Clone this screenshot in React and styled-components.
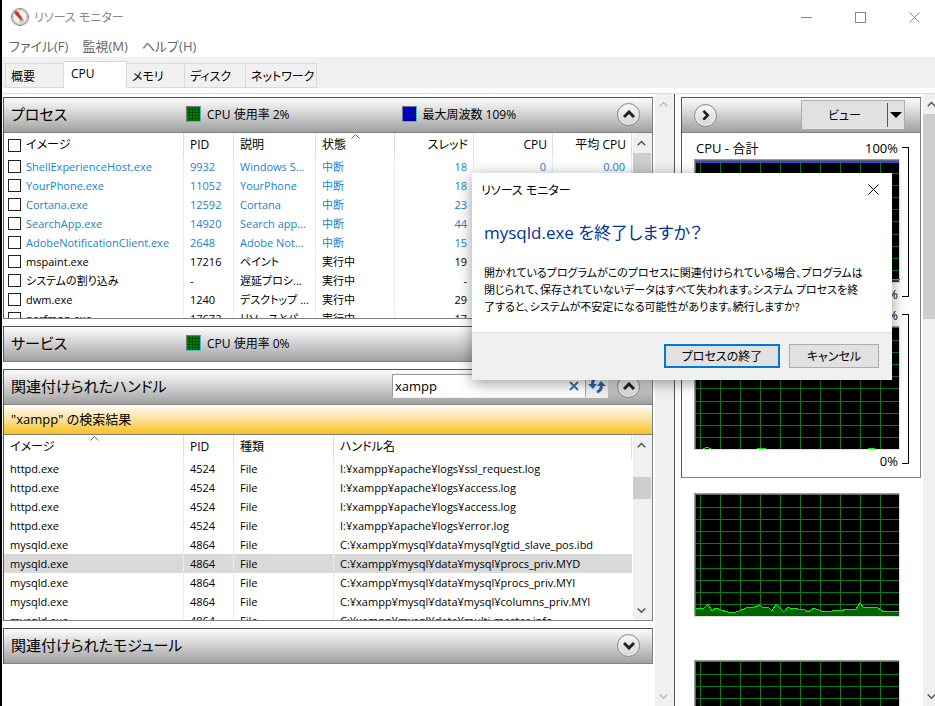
import React, { useState } from 'react';
import styled, { createGlobalStyle } from 'styled-components';

const GlobalStyle = createGlobalStyle`
  * {
    box-sizing: border-box;
  }

  body {
    margin: 0;
    background: #fff;
    color: #000;
    font-family: 'Open Sans', 'Noto Sans CJK JP', sans-serif;
    font-size: 12px;
    font-feature-settings: 'palt';
    overflow: hidden;
  }

  button, input {
    font: inherit;
    font-feature-settings: inherit;
    color: inherit;
    margin: 0;
    padding: 0;
  }
`;

const Window = styled.div`
  position: relative;
  display: flex;
  flex-direction: column;
  height: 100vh;
  border-left: 2px solid #000;
`;

const TitleBar = styled.header`
  display: flex;
  align-items: center;
  height: 34px;
  padding-left: 8px;
  color: #888;
`;

const AppTitle = styled.h1`
  flex: 1;
  margin: 0 0 0 4px;
  font-size: 12px;
  font-weight: 400;
`;

const WindowControls = styled.div`
  display: flex;
  gap: 12px;
`;

const WindowButton = styled.button`
  display: flex;
  align-items: center;
  justify-content: center;
  width: 42px;
  height: 32px;
  border: 0;
  background: none;
`;

const MenuBar = styled.nav`
  display: flex;
  gap: 14px;
  height: 23px;
  padding-left: 7px;
`;

const MenuItem = styled.button`
  border: 0;
  background: none;
  color: #666;
  font-size: 13px;
  line-height: 24px;
`;

const TabStrip = styled.div`
  display: flex;
  align-items: flex-end;
  height: 31px;
  padding-left: 3px;
  background: #f0f0f0;
`;

const Tab = styled.button`
  width: ${({ $width }) => $width}px;
  height: ${({ $active }) => ($active ? 27 : 25)}px;
  padding: ${({ $active }) => ($active ? '0 0 3px 7px' : '0 0 0 5px')};
  border: 1px solid #d9d9d9;
  border-left-width: ${({ $first }) => ($first ? 1 : 0)}px;
  border-bottom-color: ${({ $active }) => ($active ? '#fff' : '#d9d9d9')};
  background: ${({ $active }) => ($active ? '#fff' : '#f0f0f0')};
  text-align: left;
  white-space: nowrap;
`;

const Content = styled.main`
  display: flex;
  flex: 1;
  min-height: 0;
  margin-top: 5px;
  border-top: 1px solid #dcdcdc;
`;

const LeftPane = styled.div`
  display: flex;
  flex: 1;
  min-width: 0;
  gap: 2px;
  padding-left: 1px;
  border-right: 1px solid #555;
`;

const Sections = styled.div`
  display: flex;
  flex: 1;
  flex-direction: column;
  gap: 7px;
  min-width: 0;
  padding-top: 3px;
`;

const Section = styled.section`
  border: 1px solid #808080;
  border-top-color: #555;
  border-left-color: #555;
`;

const SectionHeader = styled.div`
  display: flex;
  align-items: center;
  height: ${({ $open }) => ($open ? 35 : 34)}px;
  padding: 0 12px 2px 7px;
  border-bottom: ${({ $open }) => ($open ? '1px solid #808080' : '0')};
  background: linear-gradient(#fdfdfd, #d0d0d0 50%, #a0a0a0);
`;

const SectionTitle = styled.h2`
  min-width: 175px;
  margin: 0;
  font-size: 15px;
  font-weight: 400;
  line-height: 24px;
`;

const Legend = styled.span`
  display: flex;
  align-items: center;
  gap: 6px;
  width: 219px;
`;

const Swatch = styled.span`
  width: 15px;
  height: 16px;
  border: 1px solid #777;
  border-right-color: #4bb;
  border-bottom-color: #4bb;
  background:
    repeating-linear-gradient(90deg, transparent 0 2px, rgba(0, 0, 0, 0.35) 2px 3px),
    repeating-linear-gradient(transparent 0 2px, rgba(0, 0, 0, 0.35) 2px 3px),
    ${({ $color }) => $color};
`;

const RoundButton = styled.button`
  display: flex;
  align-items: center;
  justify-content: center;
  flex: none;
  width: 23px;
  height: 23px;
  margin-left: ${({ $end }) => ($end ? 'auto' : '0')};
  border: 1px solid #888;
  border-radius: 50%;
  background: linear-gradient(#fafafa, #d4d4d4);
  box-shadow: inset 0 0 0 1px #eee;
`;

const SearchBox = styled.div`
  display: flex;
  width: 216px;
  height: 24px;
  margin: 0 9px 0 auto;
  border: 1px solid #999;
  border-right: 0;
  border-bottom-color: #eee;
  background: #fff;
`;

const SearchInput = styled.input`
  flex: 1;
  min-width: 0;
  padding-left: 2px;
  border: 0;
  outline: 0;
  background: none;
  font-size: 13px;
`;

const SearchButton = styled.button`
  display: flex;
  align-items: center;
  justify-content: center;
  width: 23px;
  border: 0;
  border-left: 1px solid ${({ $divided }) => ($divided ? '#aaa' : 'transparent')};
  background: ${({ $divided }) => ($divided ? '#f2f2f2' : 'none')};
`;

const ResultBar = styled.div`
  height: 30px;
  padding-left: 7px;
  border-bottom: 1px solid #808080;
  background: linear-gradient(#fffefa, #fbe09a 50%, #f8c31f);
  font-size: 13px;
  line-height: 29px;
`;

const ListArea = styled.div`
  display: flex;
  gap: 1px;
  height: 185px;
  overflow: hidden;
`;

const Table = styled.table`
  flex: 1;
  align-self: flex-start;
  width: 100%;
  min-width: 0;
  border-collapse: separate;
  border-spacing: 0;
  table-layout: fixed;
`;

const HeadCell = styled.th`
  position: relative;
  width: ${({ $width }) => ($width ? `${$width}px` : 'auto')};
  height: 24px;
  padding: 0 5px 0 6px;
  border-right: 1px solid #e0e0e0;
  font-weight: 400;
  line-height: 24px;
  text-align: ${({ $right }) => ($right ? 'right' : 'left')};
  white-space: nowrap;
`;

const SortMark = styled.svg`
  position: absolute;
  top: 1px;
  left: calc(50% - 4px);
`;

const Row = styled.tr`
  color: ${({ $suspended }) => ($suspended ? '#1a7fd4' : '#000')};
  background: ${({ $selected }) => ($selected ? '#d9d9d9' : 'none')};
`;

const Cell = styled.td`
  height: 19px;
  padding: 0 6px;
  border-right: 1px solid ${({ $plain }) => ($plain ? 'transparent' : '#e3eef8')};
  font-size: 11px;
  line-height: 19px;
  text-align: ${({ $right }) => ($right ? 'right' : 'left')};
  white-space: nowrap;
`;

const CheckLabel = styled.label`
  display: flex;
  align-items: center;
  gap: 5px;
  margin-left: -2px;
`;

const Checkbox = styled.input`
  appearance: none;
  width: 13px;
  height: 13px;
  border: 1px solid #222;
  background: #fff;
`;

const ScrollTrack = styled.div`
  display: flex;
  flex: none;
  flex-direction: column;
  width: ${({ $width }) => $width}px;
  background: #f0f0f0;
  overflow: hidden;
`;

const ScrollButton = styled.button`
  display: flex;
  align-items: center;
  justify-content: center;
  flex: none;
  width: 17px;
  height: 20px;
  margin-top: ${({ $end }) => ($end ? 'auto' : '0')};
  border: 0;
  background: none;
`;

const ScrollThumb = styled.div`
  flex: none;
  width: 18px;
  height: ${({ $height }) => $height}px;
  margin-top: ${({ $offset }) => $offset || 0}px;
  background: #cdcdcd;
`;

const RightPane = styled.aside`
  display: flex;
  flex: none;
  gap: 2px;
  width: 260px;
  padding-left: 6px;
`;

const GraphColumn = styled.div`
  flex: 1;
  padding-top: 3px;
  overflow: hidden;
`;

const GraphPanel = styled.section`
  padding-bottom: 4px;
  border: 1px solid #808080;
  border-top-color: #555;
  border-left-color: #555;
`;

const GraphHeader = styled.div`
  display: flex;
  align-items: center;
  justify-content: space-between;
  height: 35px;
  margin-bottom: 6px;
  padding: 0 15px 0 12px;
  border-bottom: 1px solid #808080;
  background: linear-gradient(#fdfdfd, #d0d0d0 50%, #a0a0a0);
`;

const ViewButton = styled.button`
  display: flex;
  align-items: center;
  width: 104px;
  height: 30px;
  border: 1px solid #adadad;
  background: #e1e1e1;
`;

const ViewLabel = styled.span`
  flex: 1;
`;

const ViewArrow = styled.span`
  display: flex;
  align-items: center;
  justify-content: center;
  width: 17px;
  height: 24px;
  border-left: 1px solid #555;
`;

const GraphBlock = styled.div`
  display: flex;
  gap: 2px;
  padding-left: 12px;
`;

const GraphBody = styled.div`
  width: 206px;
`;

const GraphLabels = styled.div`
  display: flex;
  justify-content: space-between;
  height: ${({ $bottom }) => ($bottom ? 23 : 20)}px;
  padding: 0 2px;
  font-size: 13px;
  line-height: ${({ $bottom }) => ($bottom ? 23 : 18)}px;
`;

const Bracket = styled.div`
  width: 7px;
  margin: 8px 0 9px;
  border: 1px solid #000;
  border-left: 0;
`;

const ExtraGraphs = styled.div`
  display: flex;
  flex-direction: column;
  gap: 43px;
  padding: 15px 0 0 13px;
`;

const GraphSvg = styled.svg`
  display: block;
`;

const Dialog = styled.div`
  position: absolute;
  top: 173px;
  right: 43px;
  width: 420px;
  background: #fff;
  box-shadow: 0 3px 14px rgba(0, 0, 0, 0.4);
`;

const DialogBar = styled.div`
  display: flex;
  align-items: center;
  justify-content: space-between;
  height: 33px;
  padding-left: 9px;
`;

const DialogClose = styled(WindowButton)`
  width: 38px;
`;

const DialogText = styled.div`
  height: 126px;
  padding: 14px 0 0 12px;
`;

const DialogHeading = styled.h2`
  margin: 0 0 18px;
  color: #003399;
  font-size: 17px;
  font-weight: 400;
  line-height: 26px;
`;

const DialogMessage = styled.p`
  margin: 0;
  font-size: 11px;
  line-height: 17px;
  white-space: nowrap;
`;

const DialogFooter = styled.div`
  display: flex;
  justify-content: flex-end;
  gap: 9px;
  height: 48px;
  padding: 11px 13px 0 0;
  border-top: 1px solid #dfdfdf;
  background: #f0f0f0;
`;

const DialogButton = styled.button`
  width: ${({ $primary }) => ($primary ? 116 : 90)}px;
  height: 24px;
  border: ${({ $primary }) => ($primary ? '2px solid #0078d7' : '1px solid #adadad')};
  background: #e1e1e1;
`;

const tabs = [
  { name: '概要', width: 59 },
  { name: 'CPU', width: 63 },
  { name: 'メモリ', width: 58 },
  { name: 'ディスク', width: 61 },
  { name: 'ネットワーク', width: 71 },
];

const processes = [
  ['ShellExperienceHost.exe', '9932', 'Windows S...', '中断', '18', '0', '0.00'],
  ['YourPhone.exe', '11052', 'YourPhone', '中断', '18', '0', '0.00'],
  ['Cortana.exe', '12592', 'Cortana', '中断', '23', '0', '0.00'],
  ['SearchApp.exe', '14920', 'Search app...', '中断', '44', '0', '0.00'],
  ['AdobeNotificationClient.exe', '2648', 'Adobe Not...', '中断', '15', '0', '0.00'],
  ['mspaint.exe', '17216', 'ペイント', '実行中', '19', '0', '0.00'],
  ['システムの割り込み', '-', '遅延プロシ...', '実行中', '-', '0', '0.00'],
  ['dwm.exe', '1240', 'デスクトップ ...', '実行中', '29', '0', '0.00'],
  ['perfmon.exe', '17672', 'リソースとパ...', '実行中', '17', '0', '0.00'],
];

const processColumns = [
  { name: 'PID', width: 50 },
  { name: '説明', width: 82 },
  { name: '状態', width: 79, sorted: true },
  { name: 'スレッド', width: 79, right: true },
  { name: 'CPU', width: 79, right: true },
  { name: '平均 CPU', right: true },
];

const handles = [
  ['httpd.exe', '4524', 'I:¥xampp¥apache¥logs¥ssl_request.log'],
  ['httpd.exe', '4524', 'I:¥xampp¥apache¥logs¥access.log'],
  ['httpd.exe', '4524', 'I:¥xampp¥apache¥logs¥access.log'],
  ['httpd.exe', '4524', 'I:¥xampp¥apache¥logs¥error.log'],
  ['mysqld.exe', '4864', 'C:¥xampp¥mysql¥data¥mysql¥gtid_slave_pos.ibd'],
  ['mysqld.exe', '4864', 'C:¥xampp¥mysql¥data¥mysql¥procs_priv.MYD'],
  ['mysqld.exe', '4864', 'C:¥xampp¥mysql¥data¥mysql¥procs_priv.MYI'],
  ['mysqld.exe', '4864', 'C:¥xampp¥mysql¥data¥mysql¥columns_priv.MYI'],
  ['mysqld.exe', '4864', 'C:¥xampp¥mysql¥data¥multi-master.info'],
];

const gridX = [6, 26, 46, 66, 86, 106, 126, 146, 166, 186];
const gridY = [14, 26, 38, 50, 62, 75, 87, 99, 111];

const totalUsage = '2,120 206,120';
const serviceUsage = '2,124 9,123 13,121 17,123 20,124 62,124 64,122 71,122 73,124 173,124 175,122 180,122 182,124 205,124';
const coreUsage =
  '2,115 10,115 14,111 18,118 22,115 27,117 34,119 42,119 50,116 54,114 58,115 65,112 70,115 74,114 78,118 82,111 86,115 90,119 94,114 98,116 102,115 106,117 110,116 114,119 120,115 127,118 138,118 143,117 147,118 152,116 162,116 166,110 170,115 174,114 184,115 190,119 196,118 201,119 205,118';

const chevrons = {
  up: 'M1 7 L6 2 L11 7',
  down: 'M1 2 L6 7 L11 2',
  right: 'M3 0 L8 5 L3 10',
};

function Chevron({ dir, size = 12, color = '#222', weight = 3 }) {
  return (
    <svg width={size} height={size * 0.75} viewBox={dir === 'right' ? '0 -1 12 12' : '0 0 12 9'} aria-hidden="true">
      <path d={chevrons[dir]} fill="none" stroke={color} strokeWidth={weight} />
    </svg>
  );
}

function CloseIcon() {
  return (
    <svg width="11" height="11" viewBox="0 0 11 11" stroke="currentColor" aria-hidden="true">
      <path d="M0.5 0.5 L10.5 10.5 M10.5 0.5 L0.5 10.5" />
    </svg>
  );
}

function GaugeIcon() {
  return (
    <svg width="20" height="20" viewBox="0 0 20 20" aria-hidden="true">
      <circle cx="10" cy="10" r="8.5" fill="#f6f3ee" stroke="#85878a" />
      <circle cx="10" cy="10" r="7.5" fill="none" stroke="#b4b5b5" />
      <circle cx="10" cy="10" r="6.5" fill="none" stroke="#dcd8d2" />
      <path d="M4.5 4 L8 4.5 L13.5 13.5 L11.5 14 L5 7 Z" fill="#d8302c" />
      <path d="M9 13.5 L14 12 L13 15 L10 15.5 Z" fill="#b9b3ac" />
    </svg>
  );
}

function RefreshIcon() {
  return (
    <svg width="18" height="16" viewBox="0 0 18 16" aria-hidden="true">
      <path d="M0 6 L9 6 L5 11 Z M9 8 L13 3 L18 8 Z" fill="#2c64ad" />
      <path d="M5 7 C4 4 5 2 7 1 M13 7 C14 11 12 13 9 14" fill="none" stroke="#2c64ad" strokeWidth="3" />
    </svg>
  );
}

function SortArrow() {
  return (
    <SortMark width="9" height="5" viewBox="0 0 9 5" aria-hidden="true">
      <path d="M0.5 4.5 L4.5 0.5 L8.5 4.5" fill="none" stroke="#666" />
    </SortMark>
  );
}

function Graph({ points, flat, cap }) {
  return (
    <GraphSvg width="206" height="124" viewBox="0 0 206 124" shapeRendering="crispEdges" aria-hidden="true">
      <rect width="206" height="124" fill="#dcdcdc" />
      <path d="M0 0 H205 V1 H1 V123 H0 Z" fill="#9a9a9a" />
      <rect x="1" y="1" width="204" height="122" fill="#666" />
      <rect x="2" y="2" width="203" height="121" fill="#000" />
      {gridY.map((y) => <rect key={y} x="2" y={y} width="203" height="1" fill="#0a7a12" />)}
      {gridX.map((x) => <rect key={x} x={x} y="2" width="1" height="121" fill="#0a7a12" />)}
      {cap && <rect x="2" y="2" width="203" height="2" fill="#2850e8" />}
      {points && (
        <>
          {!flat && <polygon points={`2,123 ${points} 205,123`} fill="#006400" />}
          <svg x="2" y="2" width="203" height="121" viewBox="2 2 203 121">
            <polyline points={points} fill="none" stroke="#00f400" />
          </svg>
        </>
      )}
    </GraphSvg>
  );
}

function UsageGraph({ label, points, flat, cap }) {
  return (
    <GraphBlock>
      <GraphBody>
        <GraphLabels>
          <span>{label}</span>
          <span>100%</span>
        </GraphLabels>
        <Graph points={points} flat={flat} cap={cap} />
        <GraphLabels $bottom>
          <span />
          <span>0%</span>
        </GraphLabels>
      </GraphBody>
      <Bracket />
    </GraphBlock>
  );
}

function ScrollBar({ width, thumb, offset, muted }) {
  const color = muted ? '#bbb' : '#555';
  return (
    <ScrollTrack $width={width}>
      <ScrollButton aria-label="上へスクロール">
        <Chevron dir="up" size={9} color={color} weight={2} />
      </ScrollButton>
      {thumb && <ScrollThumb $height={thumb} $offset={offset} />}
      <ScrollButton $end aria-label="下へスクロール">
        <Chevron dir="down" size={9} color={color} weight={2} />
      </ScrollButton>
    </ScrollTrack>
  );
}

function ProcessTable() {
  return (
    <ListArea>
      <Table>
        <thead>
          <tr>
            <HeadCell $width={180}>
              <CheckLabel>
                <Checkbox type="checkbox" />
                イメージ
              </CheckLabel>
            </HeadCell>
            {processColumns.map(({ name, width, right, sorted }) => (
              <HeadCell key={name} $width={width} $right={right}>
                {name}
                {sorted && <SortArrow />}
              </HeadCell>
            ))}
          </tr>
        </thead>
        <tbody>
          {processes.map(([image, ...rest]) => (
            <Row key={image} $suspended={rest[2] === '中断'}>
              <Cell>
                <CheckLabel>
                  <Checkbox type="checkbox" />
                  {image}
                </CheckLabel>
              </Cell>
              {rest.map((value, i) => (
                <Cell key={processColumns[i].name} $right={processColumns[i].right}>{value}</Cell>
              ))}
            </Row>
          ))}
        </tbody>
      </Table>
      <ScrollBar width={19} thumb={120} />
    </ListArea>
  );
}

function HandleTable() {
  return (
    <ListArea>
      <Table>
        <thead>
          <tr>
            <HeadCell $width={180}>
              イメージ
              <SortArrow />
            </HeadCell>
            <HeadCell $width={50}>PID</HeadCell>
            <HeadCell $width={100}>種類</HeadCell>
            <HeadCell>ハンドル名</HeadCell>
          </tr>
        </thead>
        <tbody>
          {handles.map(([image, pid, path], i) => (
            <Row key={i} $selected={i === 5}>
              <Cell>{image}</Cell>
              <Cell>{pid}</Cell>
              <Cell>File</Cell>
              <Cell $plain>{path}</Cell>
            </Row>
          ))}
        </tbody>
      </Table>
      <ScrollBar width={19} thumb={22} offset={22} />
    </ListArea>
  );
}

function EndProcessDialog() {
  return (
    <Dialog role="dialog" aria-labelledby="dialog-heading">
      <DialogBar>
        <span>リソース モニター</span>
        <DialogClose aria-label="閉じる"><CloseIcon /></DialogClose>
      </DialogBar>
      <DialogText>
        <DialogHeading id="dialog-heading">mysqld.exe を終了しますか？</DialogHeading>
        <DialogMessage>
          開かれているプログラムがこのプロセスに関連付けられている場合、プログラムは<br />
          閉じられて、保存されていないデータはすべて失われます。システム プロセスを終<br />
          了すると、システムが不安定になる可能性があります。続行しますか?
        </DialogMessage>
      </DialogText>
      <DialogFooter>
        <DialogButton $primary>プロセスの終了</DialogButton>
        <DialogButton>キャンセル</DialogButton>
      </DialogFooter>
    </Dialog>
  );
}

function App() {
  const [activeTab, setActiveTab] = useState('CPU');
  const [search, setSearch] = useState('xampp');

  return (
    <>
      <GlobalStyle />
      <Window>
        <TitleBar>
          <GaugeIcon />
          <AppTitle>リソース モニター</AppTitle>
          <WindowControls>
            <WindowButton aria-label="最小化">
              <svg width="11" height="11" viewBox="0 0 11 11" stroke="currentColor"><path d="M0 5.5 H11" /></svg>
            </WindowButton>
            <WindowButton aria-label="最大化">
              <svg width="11" height="11" viewBox="0 0 11 11" stroke="currentColor"><rect x="0.5" y="0.5" width="10" height="10" fill="none" /></svg>
            </WindowButton>
            <WindowButton aria-label="閉じる"><CloseIcon /></WindowButton>
          </WindowControls>
        </TitleBar>
        <MenuBar>
          <MenuItem>ファイル(F)</MenuItem>
          <MenuItem>監視(M)</MenuItem>
          <MenuItem>ヘルプ(H)</MenuItem>
        </MenuBar>
        <TabStrip role="tablist">
          {tabs.map(({ name, width }, i) => (
            <Tab
              key={name}
              role="tab"
              aria-selected={name === activeTab}
              $width={width}
              $first={i === 0}
              $active={name === activeTab}
              onClick={() => setActiveTab(name)}
            >
              {name}
            </Tab>
          ))}
        </TabStrip>
        <Content>
          <LeftPane>
            <Sections>
              <Section>
                <SectionHeader $open>
                  <SectionTitle>プロセス</SectionTitle>
                  <Legend><Swatch $color="#008000" />CPU 使用率 2%</Legend>
                  <Legend><Swatch $color="#0000e8" />最大周波数 109%</Legend>
                  <RoundButton $end aria-label="折りたたむ"><Chevron dir="up" /></RoundButton>
                </SectionHeader>
                <ProcessTable />
              </Section>
              <Section>
                <SectionHeader>
                  <SectionTitle>サービス</SectionTitle>
                  <Legend><Swatch $color="#008000" />CPU 使用率 0%</Legend>
                  <RoundButton $end aria-label="展開"><Chevron dir="down" /></RoundButton>
                </SectionHeader>
              </Section>
              <Section>
                <SectionHeader $open>
                  <SectionTitle>関連付けられたハンドル</SectionTitle>
                  <SearchBox>
                    <SearchInput
                      type="text"
                      aria-label="ハンドルの検索"
                      value={search}
                      onChange={(e) => setSearch(e.target.value)}
                    />
                    <SearchButton aria-label="クリア">
                      <svg width="10" height="10" viewBox="0 0 10 10"><path d="M1 1 L9 9 M9 1 L1 9" stroke="#3d76a8" strokeWidth="2" /></svg>
                    </SearchButton>
                    <SearchButton $divided aria-label="更新"><RefreshIcon /></SearchButton>
                  </SearchBox>
                  <RoundButton aria-label="折りたたむ"><Chevron dir="up" /></RoundButton>
                </SectionHeader>
                <ResultBar>"xampp" の検索結果</ResultBar>
                <HandleTable />
              </Section>
              <Section>
                <SectionHeader>
                  <SectionTitle>関連付けられたモジュール</SectionTitle>
                  <RoundButton $end aria-label="展開"><Chevron dir="down" /></RoundButton>
                </SectionHeader>
              </Section>
            </Sections>
            <ScrollBar width={19} muted />
          </LeftPane>
          <RightPane>
            <GraphColumn>
              <GraphPanel>
                <GraphHeader>
                  <RoundButton aria-label="グラフを隠す"><Chevron dir="right" size={14} /></RoundButton>
                  <ViewButton>
                    <ViewLabel>ビュー</ViewLabel>
                    <ViewArrow>
                      <svg width="12" height="6" viewBox="0 0 12 6"><path d="M0 0 H12 L6 6 Z" /></svg>
                    </ViewArrow>
                  </ViewButton>
                </GraphHeader>
                <UsageGraph label="CPU - 合計" points={totalUsage} cap />
                <UsageGraph points={serviceUsage} flat />
              </GraphPanel>
              <ExtraGraphs>
                <Graph points={coreUsage} />
                <Graph />
              </ExtraGraphs>
            </GraphColumn>
            <ScrollBar width={12} thumb={205} />
          </RightPane>
        </Content>
        <EndProcessDialog />
      </Window>
    </>
  );
}

export default App;
